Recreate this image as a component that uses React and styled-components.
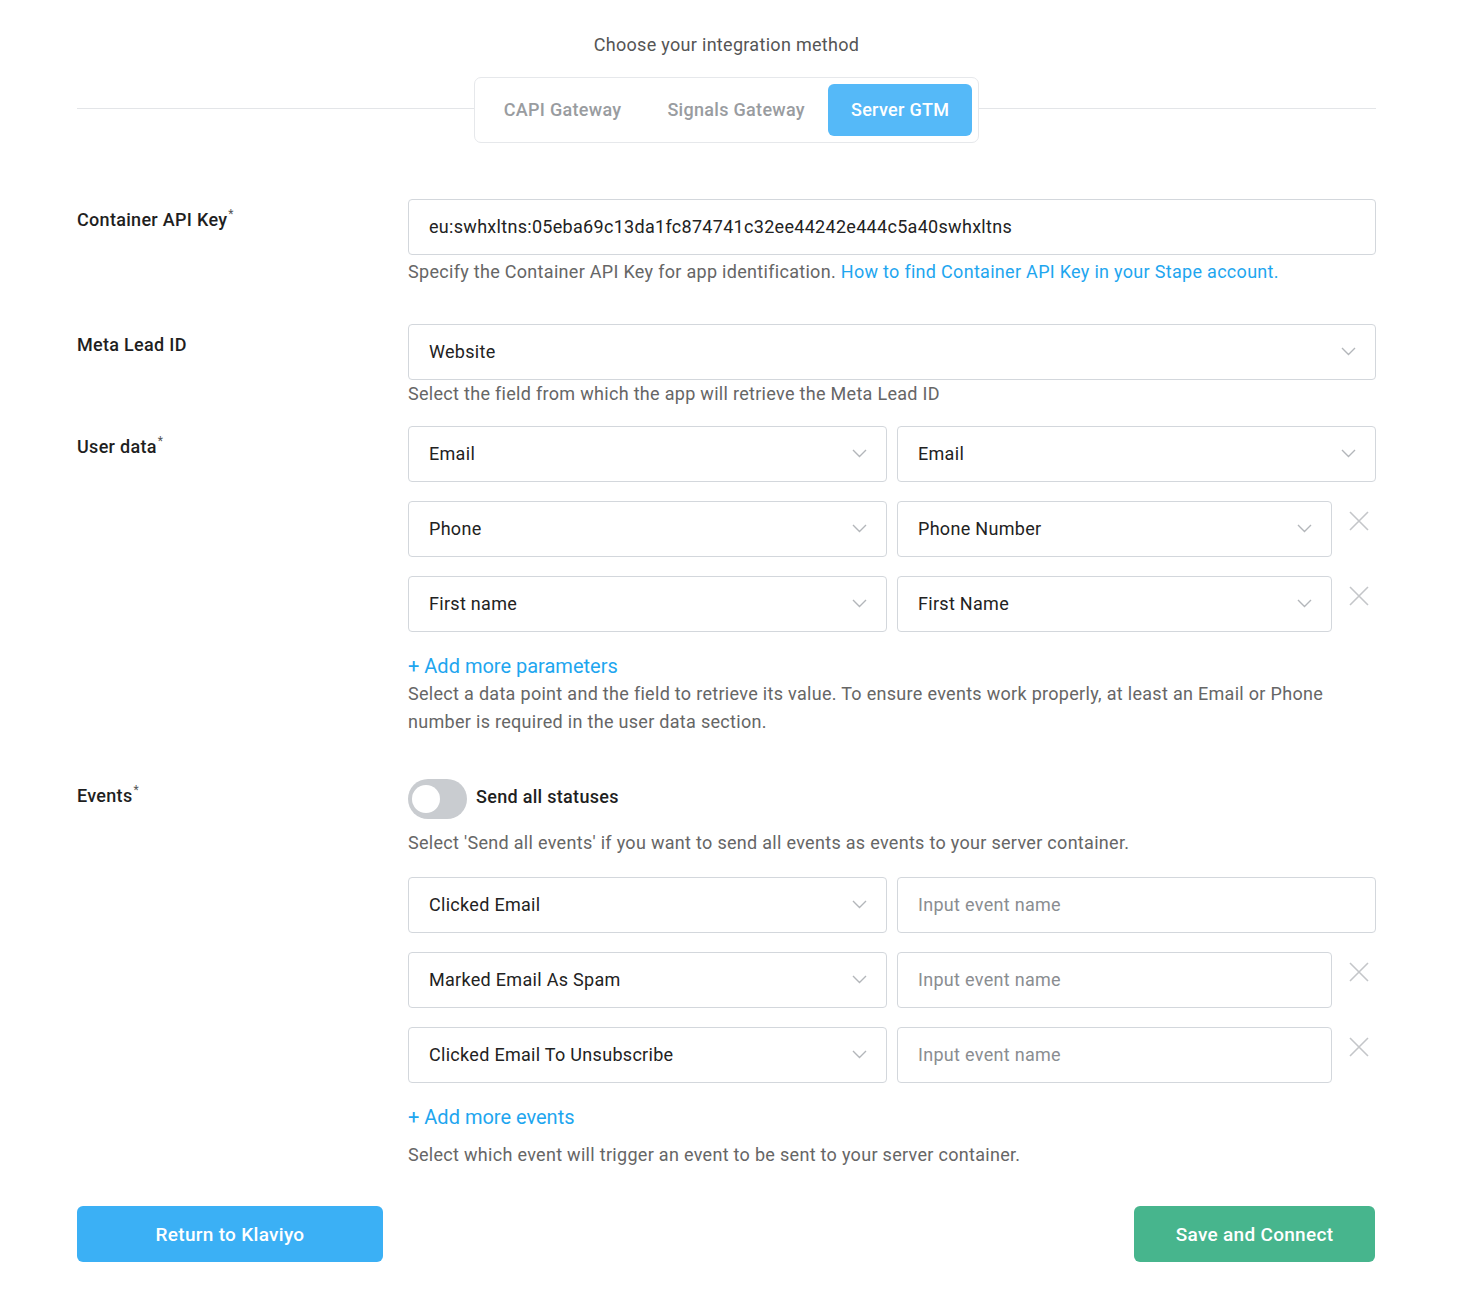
import styled, { createGlobalStyle } from "styled-components";

const userRows = [
  { left: "Email", right: "Email", removable: false },
  { left: "Phone", right: "Phone Number", removable: true },
  { left: "First name", right: "First Name", removable: true },
];

const eventRows = [
  { left: "Clicked Email", removable: false },
  { left: "Marked Email As Spam", removable: true },
  { left: "Clicked Email To Unsubscribe", removable: true },
];

function Chevron() {
  return (
    <svg width="15" height="9" viewBox="0 0 15 9" fill="none">
      <path d="M1 1l6.5 6.5L14 1" stroke="#b3b6ba" strokeWidth="1.4" />
    </svg>
  );
}

function Cross() {
  return (
    <svg width="20" height="20" viewBox="0 0 20 20" fill="none">
      <path d="M1 1l18 18M19 1L1 19" stroke="#c4c6c9" strokeWidth="1.6" />
    </svg>
  );
}

function Select({ value }) {
  return (
    <Field>
      <span>{value}</span>
      <Chevron />
    </Field>
  );
}

function App() {
  return (
    <>
      <GlobalStyle />
      <Page>
        <Title>Choose your integration method</Title>
        <TabsRow>
          <Line />
          <Tabs>
            <Tab>CAPI Gateway</Tab>
            <Tab>Signals Gateway</Tab>
            <Tab $active>Server GTM</Tab>
          </Tabs>
          <Line />
        </TabsRow>

        <Section $mt={56}>
          <Label>
            Container API Key<Star>*</Star>
          </Label>
          <Col>
            <Field>
              <span>eu:swhxltns:05eba69c13da1fc874741c32ee44242e444c5a40swhxltns</span>
            </Field>
            <Help $mt={3}>
              Specify the Container API Key for app identification.{" "}
              <LinkText>How to find Container API Key in your Stape account.</LinkText>
            </Help>
          </Col>
        </Section>

        <Section $mt={38}>
          <Label>Meta Lead ID</Label>
          <Col>
            <Select value="Website" />
            <Help>Select the field from which the app will retrieve the Meta Lead ID</Help>
          </Col>
        </Section>

        <Section $mt={18}>
          <Label>
            User data<Star>*</Star>
          </Label>
          <Col>
            <Rows>
              {userRows.map((r) => (
                <Row key={r.left} $removable={r.removable}>
                  <Select value={r.left} />
                  <Select value={r.right} />
                  {r.removable && (
                    <Remove>
                      <Cross />
                    </Remove>
                  )}
                </Row>
              ))}
            </Rows>
            <AddMore $mt={20}>+ Add more parameters</AddMore>
            <Help>
              Select a data point and the field to retrieve its value. To ensure events work properly, at least an Email or Phone
              number is required in the user data section.
            </Help>
          </Col>
        </Section>

        <Section $mt={43}>
          <Label $pt={5}>
            Events<Star>*</Star>
          </Label>
          <Col>
            <ToggleRow>
              <Toggle>
                <Knob />
              </Toggle>
              <ToggleText>Send all statuses</ToggleText>
            </ToggleRow>
            <Help $mt={10}>
              Select 'Send all events' if you want to send all events as events to your server container.
            </Help>
            <Rows $mt={20}>
              {eventRows.map((r) => (
                <Row key={r.left} $removable={r.removable}>
                  <Select value={r.left} />
                  <Field>
                    <Placeholder>Input event name</Placeholder>
                  </Field>
                  {r.removable && (
                    <Remove>
                      <Cross />
                    </Remove>
                  )}
                </Row>
              ))}
            </Rows>
            <AddMore $mt={20}>+ Add more events</AddMore>
            <Help $mt={10}>Select which event will trigger an event to be sent to your server container.</Help>
          </Col>
        </Section>

        <Footer>
          <Button $color="#3bb0f5" $width={306}>
            Return to Klaviyo
          </Button>
          <Button $color="#47b58d" $width={241}>
            Save and Connect
          </Button>
        </Footer>
      </Page>
    </>
  );
}

const GlobalStyle = createGlobalStyle`
  body {
    margin: 0;
    background: #ffffff;
    font-family: Roboto, "Liberation Sans", Arial, sans-serif;
    letter-spacing: 0.3px;
    color: #222;
  }
`;

const Page = styled.div`
  width: 1299px;
  padding: 33px 0 36px 77px;
  display: flex;
  flex-direction: column;
`;

const Title = styled.div`
  text-align: center;
  font-size: 18px;
  line-height: 24px;
  color: #555;
`;

const TabsRow = styled.div`
  display: flex;
  align-items: center;
  margin-top: 20px;
`;

const Line = styled.div`
  flex: 1;
  height: 1px;
  background: #e3e5e8;
  margin-top: -4px;
`;

const Tabs = styled.div`
  display: flex;
  padding: 6px;
  border: 1px solid #e6e8eb;
  border-radius: 7px;
  background: #fff;
`;

const Tab = styled.div`
  height: 52px;
  padding: 0 23px 2px;
  box-sizing: border-box;
  display: flex;
  align-items: center;
  font-size: 18px;
  font-weight: 500;
  border-radius: 6px;
  color: ${(p) => (p.$active ? "#fff" : "#999ca0")};
  background: ${(p) => (p.$active ? "#55b9f8" : "transparent")};
`;

const Section = styled.div`
  display: grid;
  grid-template-columns: 331px 968px;
  margin-top: ${(p) => p.$mt}px;
`;

const Label = styled.div`
  padding-top: ${(p) => (p.$pt ?? 9)}px;
  font-size: 18px;
  line-height: 24px;
  font-weight: 500;
  color: #1f1f1f;
`;

const Star = styled.sup`
  font-size: 12px;
  font-weight: 400;
  line-height: 0;
  color: #555;
  margin-left: 1px;
  vertical-align: 8px;
`;

const Col = styled.div`
  display: flex;
  flex-direction: column;
`;

const Field = styled.div`
  height: 56px;
  box-sizing: border-box;
  border: 1px solid #d3d7dc;
  border-radius: 4px;
  padding: 0 19px 2px 20px;
  display: flex;
  align-items: center;
  justify-content: space-between;
  font-size: 18px;
  color: #222;
  background: #fff;
`;

const Placeholder = styled.span`
  color: #8a8d91;
`;

const Help = styled.div`
  margin-top: ${(p) => p.$mt ?? 0}px;
  font-size: 18px;
  line-height: 28px;
  color: #666;
`;

const LinkText = styled.span`
  color: #1ea6ef;
`;

const Rows = styled.div`
  display: flex;
  flex-direction: column;
  gap: 19px;
  margin-top: ${(p) => p.$mt ?? 0}px;
`;

const Row = styled.div`
  display: grid;
  grid-template-columns: ${(p) => (p.$removable ? "479px 435px 44px" : "479px 479px")};
  column-gap: 10px;
`;

const Remove = styled.div`
  display: flex;
  justify-content: center;
  padding: 10px 0 0 0;
  margin-left: -10px;
`;

const AddMore = styled.div`
  margin-top: ${(p) => p.$mt}px;
  font-size: 20px;
  line-height: 28px;
  letter-spacing: 0;
  color: #1ea6ef;
`;

const ToggleRow = styled.div`
  display: flex;
  align-items: center;
  gap: 9px;
`;

const Toggle = styled.div`
  width: 59px;
  height: 40px;
  border-radius: 20px;
  background: #c9ccd0;
  display: flex;
  align-items: center;
  padding-left: 4px;
  box-sizing: border-box;
`;

const Knob = styled.div`
  width: 28px;
  height: 28px;
  border-radius: 50%;
  background: #fff;
`;

const ToggleText = styled.div`
  font-size: 18px;
  font-weight: 500;
  color: #1f1f1f;
  margin-top: -6px;
`;

const Footer = styled.div`
  display: flex;
  justify-content: space-between;
  margin-top: 37px;
  padding-right: 1px;
`;

const Button = styled.button`
  width: ${(p) => p.$width}px;
  height: 56px;
  border: none;
  border-radius: 6px;
  background: ${(p) => p.$color};
  color: #fff;
  font-family: inherit;
  font-size: 19px;
  font-weight: 500;
  letter-spacing: 0.3px;
  cursor: pointer;
`;

export default App;
